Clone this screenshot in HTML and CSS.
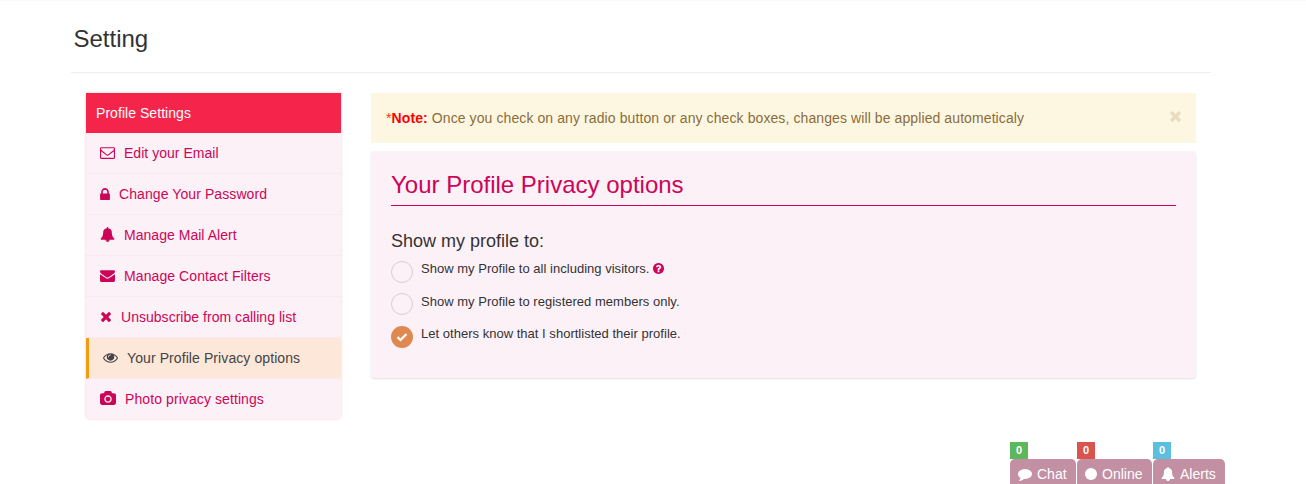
FILE: index.html
```
<!DOCTYPE html>
<html lang="en">
<head>
<meta charset="utf-8">
<title>Setting</title>
<link rel="stylesheet" href="styles.css">
</head>
<body>
<svg class="sprite" aria-hidden="true">
<symbol id="bell" viewBox="0 0 1792 1792"><path d="M912 1696q0-16-16-16-59 0-101.5-42.5t-42.5-101.5q0-16-16-16t-16 16q0 73 51.5 124.5t124.5 51.5q16 0 16-16zm816-288q0 52-38 90t-90 38h-448q0 106-75 181t-181 75-181-75-75-181h-448q-52 0-90-38t-38-90q50-42 91-88t85-119.5 74.5-158.5 50-206 19.5-260q0-152 117-282.5t307-158.5q-8-19-8-39 0-40 28-68t68-28 68 28 28 68q0 20-8 39 190 28 307 158.5t117 282.5q0 139 19.5 260t50 206 74.5 158.5 85 119.5 91 88z"/></symbol>
<symbol id="times" viewBox="192 0 1408 1792"><path d="M1490 1322q0 40-28 68l-136 136q-28 28-68 28t-68-28l-294-294-294 294q-28 28-68 28t-68-28l-136-136q-28-28-28-68t28-68l294-294-294-294q-28-28-28-68t28-68l136-136q28-28 68-28t68 28l294 294 294-294q28-28 68-28t68 28l136 136q28 28 28 68t-28 68l-294 294 294 294q28 28 28 68z"/></symbol>
</svg>
<main class="page">
  <h1 class="page-title">Setting</h1>
  <div class="columns">
    <nav class="menu">
      <div class="menu-head">Profile Settings</div>
      <a class="menu-item"><svg class="icon" viewBox="0 0 1792 1792"><path d="M1664 1504v-768q-32 36-69 66-268 206-426 338-51 43-83 67t-86.5 48.5-102.5 24.5h-2q-48 0-102.5-24.5t-86.5-48.5-83-67q-158-132-426-338-37-30-69-66v768q0 13 9.5 22.5t22.5 9.5h1472q13 0 22.5-9.5t9.5-22.5zm0-1051v-24.5l-.5-13-3-12.5-5.5-9-9-7.5-14-2.5h-1472q-13 0-22.5 9.5t-9.5 22.5q0 168 147 284 193 152 401 317 6 5 35 29.5t46 37.5 44.5 31.5 50.5 27.5 43 9h2q20 0 43-9t50.5-27.5 44.5-31.5 46-37.5 35-29.5q208-165 401-317 54-43 100.5-115.5t46.5-131.5zm128-37v1088q0 66-47 113t-113 47h-1472q-66 0-113-47t-47-113v-1088q0-66 47-113t113-47h1472q66 0 113 47t47 113z"/></svg><span>Edit your Email</span></a>
      <a class="menu-item wide"><svg class="icon icon-lock" viewBox="320 128 1152 1408"><path d="M640 768h512v-192q0-106-75-181t-181-75-181 75-75 181v192zm832 96v576q0 40-28 68t-68 28h-960q-40 0-68-28t-28-68v-576q0-40 28-68t68-28h32v-192q0-184 132-316t316-132 316 132 132 316v192h32q40 0 68 28t28 68z"/></svg><span>Change Your Password</span></a>
      <a class="menu-item"><svg class="icon"><use href="#bell"/></svg><span>Manage Mail Alert</span></a>
      <a class="menu-item wide"><svg class="icon" viewBox="0 0 1792 1792"><path d="M1792 710v794q0 66-47 113t-113 47h-1472q-66 0-113-47t-47-113v-794q44 49 101 87 362 246 497 345 57 42 92.5 65.5t94.5 48 110 24.5h2q51 0 110-24.5t94.5-48 92.5-65.5q170-123 498-345 57-39 100-87zm0-294q0 79-49 151t-122 123q-376 261-468 325-10 7-42.5 31t-54 38.5-52 32.5-57.5 27-50 9h-2q-23 0-50-9t-57.5-27-52-32.5-54-38.5-42.5-31q-91-64-262-182.5t-205-142.5q-62-42-117-115.5t-55-136.5q0-78 41.5-130t118.5-52h1472q65 0 112.5 47t47.5 113z"/></svg><span>Manage Contact Filters</span></a>
      <a class="menu-item"><svg class="icon icon-times"><use href="#times"/></svg><span>Unsubscribe from calling list</span></a>
      <a class="menu-item active wide"><svg class="icon" viewBox="0 0 1792 1792"><path d="M1664 960q-152-236-381-353 61 104 61 225 0 185-131.5 316.5t-316.5 131.5-316.5-131.5-131.5-316.5q0-121 61-225-229 117-381 353 133 205 333.5 326.5t434.5 121.5 434.5-121.5 333.5-326.5zm-720-384q0-20-14-34t-34-14q-125 0-214.5 89.5t-89.5 214.5q0 20 14 34t34 14 34-14 14-34q0-86 61-147t147-61q20 0 34-14t14-34zm848 384q0 34-20 69-140 230-376.5 368.5t-499.5 138.5-499.5-139-376.5-368q-20-35-20-69t20-69q140-229 376.5-368t499.5-139 499.5 139 376.5 368q20 35 20 69z"/></svg><span>Your Profile Privacy options</span></a>
      <a class="menu-item wide"><svg class="icon icon-camera" viewBox="-64 0 1920 1792"><path d="M896 672q119 0 203.5 84.5t84.5 203.5-84.5 203.5-203.5 84.5-203.5-84.5-84.5-203.5 84.5-203.5 203.5-84.5zm704-416q106 0 181 75t75 181v896q0 106-75 181t-181 75h-1408q-106 0-181-75t-75-181v-896q0-106 75-181t181-75h224l51-136q19-49 69.5-84.5t103.5-35.5h512q53 0 103.5 35.5t69.5 84.5l51 136h224zm-704 1152q185 0 316.5-131.5t131.5-316.5-131.5-316.5-316.5-131.5-316.5 131.5-131.5 316.5 131.5 316.5 316.5 131.5z"/></svg><span>Photo privacy settings</span></a>
    </nav>
    <section class="content">
      <div class="note">
        <p class="note-text"><span class="star">*</span><b class="note-label">Note:</b> Once you check on any radio button or any check boxes, changes will be applied autometicaly</p>
        <svg class="close"><use href="#times"/></svg>
      </div>
      <div class="panel">
        <h2 class="panel-title">Your Profile Privacy options</h2>
        <h3 class="group-title">Show my profile to:</h3>
        <div class="option"><span class="radio"></span><span class="label">Show my Profile to all including visitors.</span><svg class="help" viewBox="128 128 1536 1536"><path d="M1024 1376v-192q0-14-9-23t-23-9h-192q-14 0-23 9t-9 23v192q0 14 9 23t23 9h192q14 0 23-9t9-23zm256-672q0-88-55.5-163t-138.5-116-170-41q-243 0-371 213-15 24 8 42l132 100q7 6 19 6 16 0 25-12 53-68 86-92 34-24 86-24 48 0 85.5 26t37.5 59q0 38-20 61t-68 45q-63 28-115.5 86.5t-52.5 125.5v36q0 14 9 23t23 9h192q14 0 23-9t9-23q0-19 21.5-49.5t54.5-49.5q32-18 49-28.5t46-35 44.5-48 28-60.5 12.5-81zm384 192q0 209-103 385.5t-279.5 279.5-385.5 103-385.5-103-279.5-279.5-103-385.5 103-385.5 279.5-279.5 385.5-103 385.5 103 279.5 279.5 103 385.5z"/></svg></div>
        <div class="option second"><span class="radio"></span><span class="label">Show my Profile to registered members only.</span></div>
        <div class="option"><span class="radio checked"><svg class="tick" viewBox="0 0 12 10"><path d="M1.5 5.2 4.5 8 10.5 2"/></svg></span><span class="label">Let others know that I shortlisted their profile.</span></div>
      </div>
    </section>
  </div>
</main>
<footer class="dock">
  <div class="dock-item chat"><span class="badge">0</span><a class="tab"><svg class="tab-icon" viewBox="0 0 1792 1792"><path d="M1792 896q0 174-120 321.5t-326 233-450 85.5q-70 0-145-8-198 175-460 242-49 14-114 22-17 2-30.5-9t-17.5-29v-1q-3-4-.5-12t2-10 4.5-9.5l6-9 7-8.5 8-9q7-8 31-34.5t34.5-38 31-39.5 32.5-51 27-59 26-76q-157-89-247.5-220t-90.5-281q0-130 71-248.5t191-204.5 286-136.5 348-50.5q244 0 450 85.5t326 233 120 321.5z"/></svg><span>Chat</span></a></div>
  <div class="dock-item online"><span class="badge">0</span><a class="tab"><svg class="tab-icon tab-dot" viewBox="0 0 12 14"><circle cx="6" cy="7" r="6"/></svg><span>Online</span></a></div>
  <div class="dock-item alerts"><span class="badge">0</span><a class="tab"><svg class="tab-icon"><use href="#bell"/></svg><span>Alerts</span></a></div>
</footer>
</body>
</html>
```
FILE: styles.css
```
* { box-sizing: border-box; }
body {
  margin: 0;
  height: 484px;
  overflow: hidden;
  display: flex;
  flex-direction: column;
  justify-content: space-between;
  background: #fff;
  border-top: 1px solid #fafafa;
  color: #333;
  font: 14px/20px "Liberation Sans", Arial, sans-serif;
}
h1, h2, h3, p { margin: 0; font-weight: 400; }
.sprite { display: none; }
.page { width: 1140px; margin-left: 71px; }
.page-title {
  height: 72px;
  padding: 24px 0 0 2.5px;
  border-bottom: 1px solid #eee;
  font-size: 24px;
  line-height: 28px;
}
.columns { display: flex; align-items: flex-start; gap: 30px; padding: 20px 15px 0; }
.menu {
  width: 255px;
  background: #fdf1f8;
  border-radius: 0 0 4px 4px;
  box-shadow: 0 0 2px 1px #fce4e6;
}
.menu-head { height: 40px; padding: 10px; background: #f5244a; color: #fff; letter-spacing: .05px; }
.menu-item {
  display: flex;
  align-items: center;
  gap: 9px;
  height: 41px;
  padding-left: 14px;
  border-bottom: 1px solid #fbe8f0;
  color: #cc0557;
  letter-spacing: .03px;
}
.menu-item.wide { letter-spacing: .09px; }
.menu-item:last-child { height: 40px; border-bottom: 0; }
.menu-item.active { border-left: 3px solid #f39c12; background: #fce7d9; color: #444; }
.icon { width: 15px; height: 15px; margin-top: -1px; fill: currentColor; }
.icon-lock { width: 10px; height: 12px; }
.icon-times { width: 12px; height: 15px; }
.icon-camera { width: 16px; }
.content { width: 825px; }
.note {
  display: flex;
  justify-content: space-between;
  height: 50px;
  padding: 15px 14px 0 15px;
  background: #fdf7e2;
  color: #8a6d3b;
}
.note-text { letter-spacing: .095px; }
.star { color: #f30; }
.note-label { color: #f00; }
.close { width: 13px; height: 16px; fill: #e6dcc0; }
.panel {
  height: 227px;
  margin-top: 8px;
  padding: 20px 20px 0;
  border-radius: 4px;
  background: #fdf1f8;
  box-shadow: 0 1px 2px rgba(0, 0, 0, .13);
}
.panel-title {
  height: 35px;
  border-bottom: 1px solid #cc0557;
  color: #cc0557;
  font-size: 24px;
  line-height: 28px;
}
.group-title { margin-top: 24px; font-size: 18px; line-height: 22px; }
.option { display: flex; height: 33px; padding-top: 9px; font-size: 13px; line-height: 16px; letter-spacing: .02px; }
.option.second { height: 32px; }
.radio {
  width: 22px;
  height: 22px;
  margin-right: 8px;
  border: 1px solid #d9cdcd;
  border-radius: 50%;
}
.second .radio { margin-top: -1px; }
.radio.checked { display: grid; place-items: center; border: 0; background: #df8850; }
.tick { width: 12px; height: 10px; fill: none; stroke: #fff; stroke-width: 2.3; }
.help { width: 11px; height: 11px; margin: 2px 0 0 4px; fill: #cc0557; }
.dock { display: flex; gap: 1px; height: 42px; padding-left: 1010px; }
.badge {
  display: block;
  width: 18px;
  height: 17px;
  color: #fff;
  font-weight: 700;
  font-size: 11px;
  line-height: 17px;
  text-align: center;
}
.tab {
  display: flex;
  align-items: center;
  gap: 5px;
  height: 25px;
  padding: 5px 0 0 8px;
  border-radius: 5px 5px 0 0;
  background: #c38fa3;
  color: #fff;
}
.tab-icon { width: 14px; height: 14px; fill: #fff; }
.tab-dot { width: 12px; }
.chat { width: 66px; }
.online { width: 75px; }
.alerts { width: 72px; }
.chat .badge { background: #5cb85c; }
.online .badge { background: #d9534f; }
.alerts .badge { background: #5bc0de; }
```
